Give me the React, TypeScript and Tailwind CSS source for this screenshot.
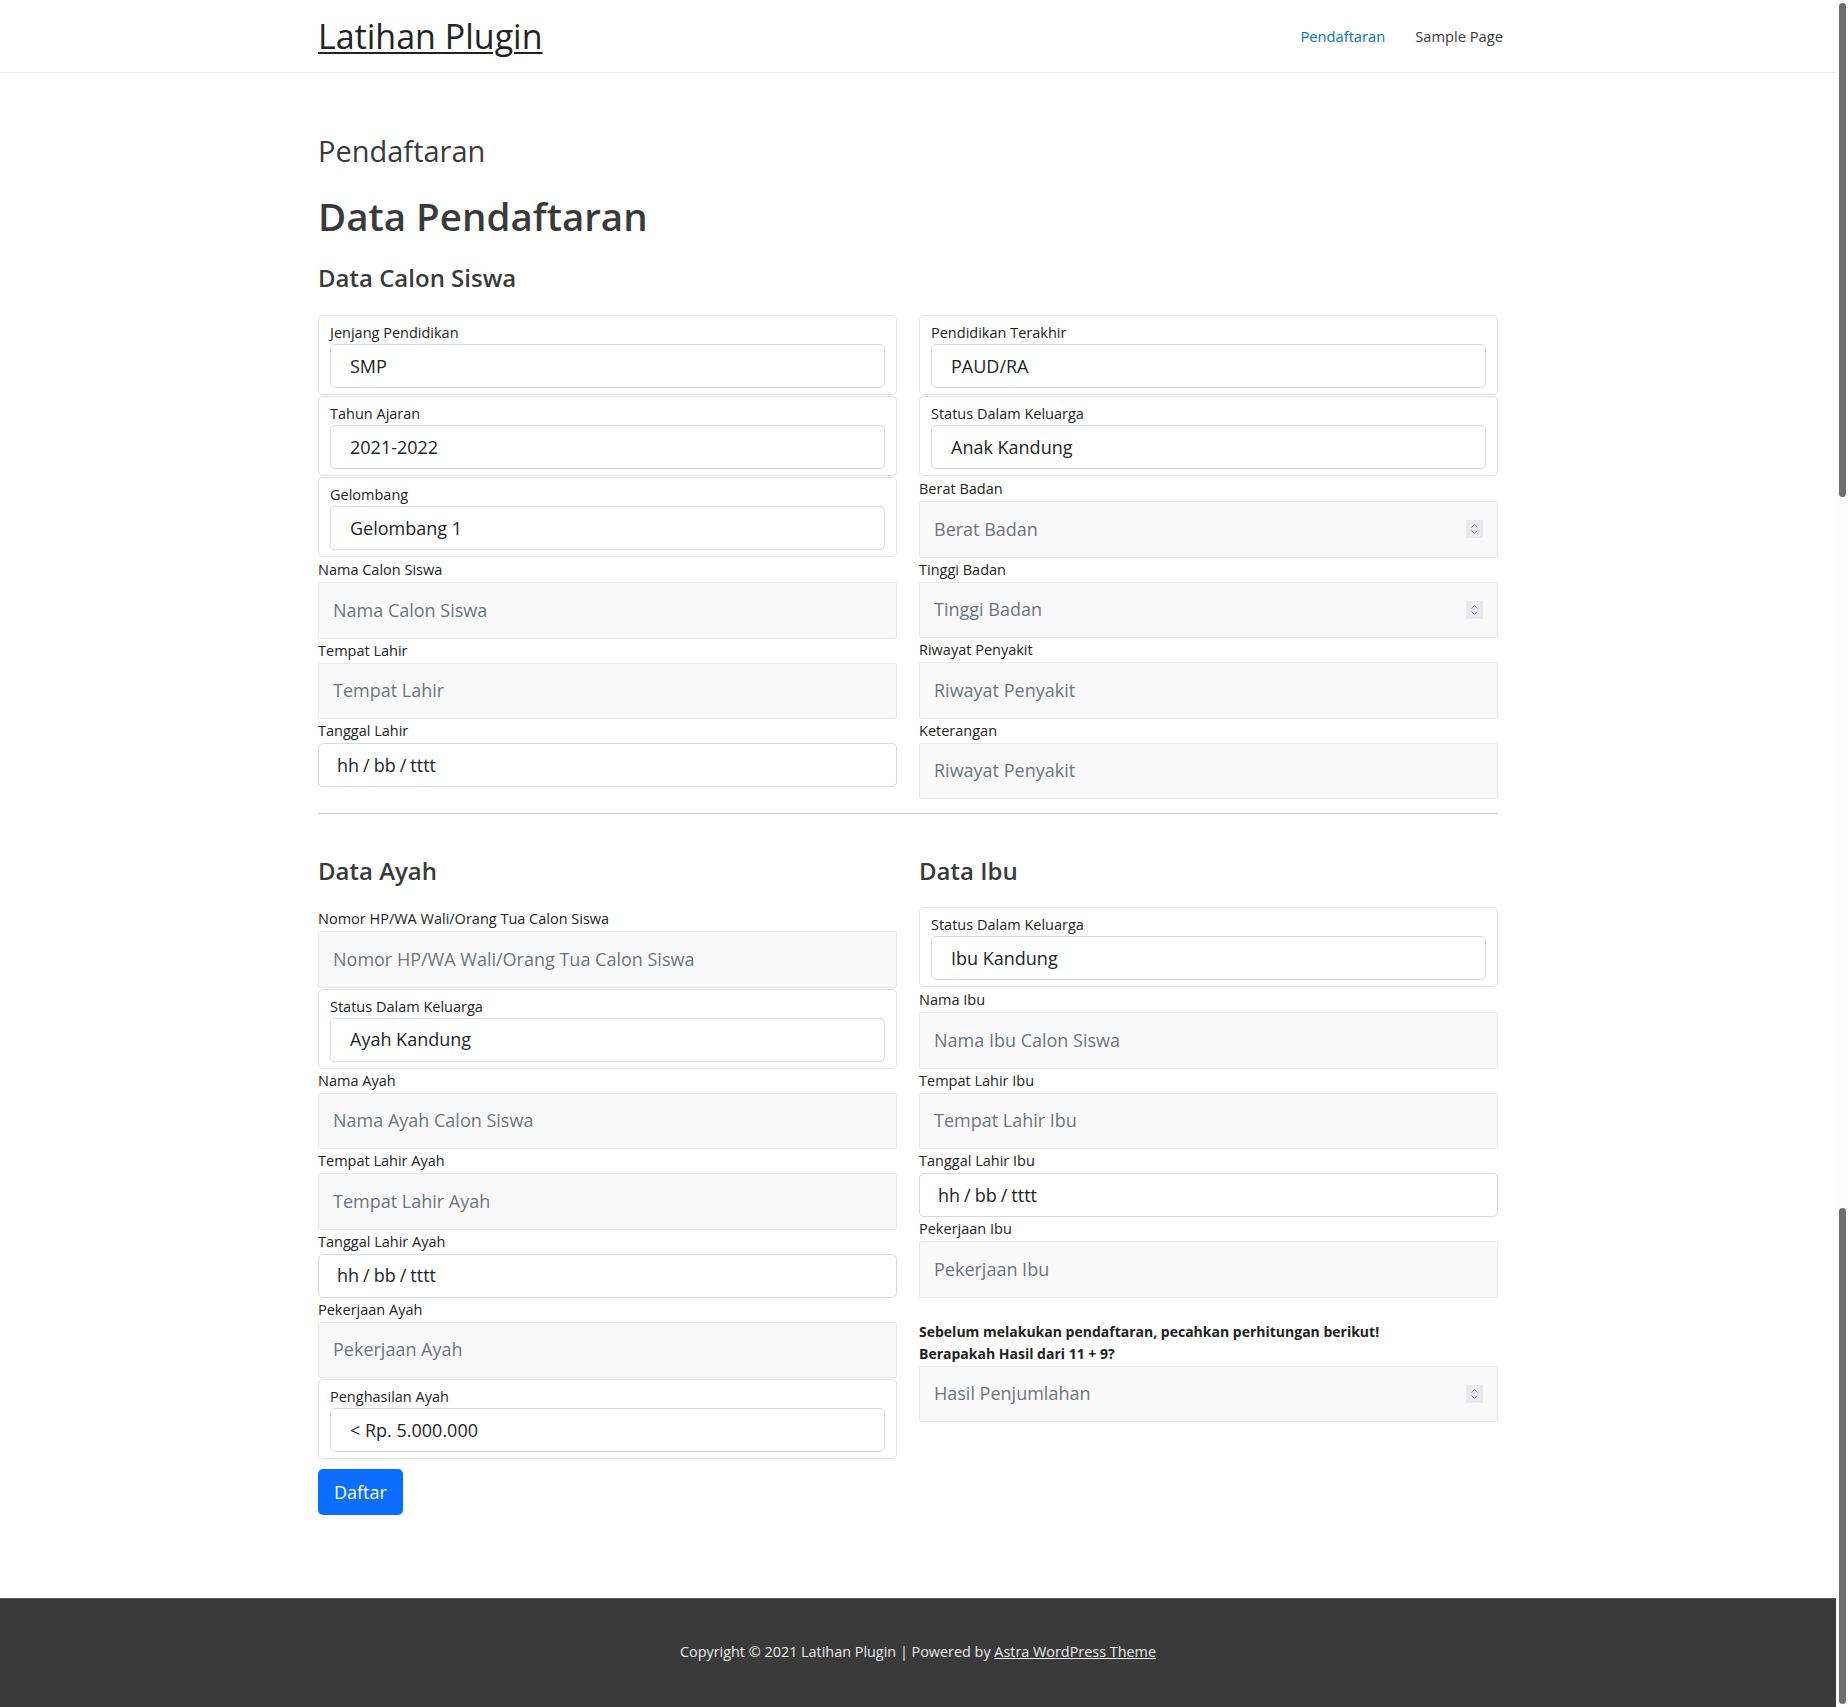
import type { ReactNode } from 'react';

function FieldLabel({ children }: { children: ReactNode }) {
  return <div className="h-[24px] text-[14.5px] leading-[24px] text-[#222]">{children}</div>;
}

function BoxSelect({ label, value, gapTop = false }: { label: string; value: string; gapTop?: boolean }) {
  return (
    <div className={`${gapTop ? 'mt-px' : 'mb-px'} h-[80px] rounded-[5px] border border-[#dee2e6] px-[11px] pt-[7px]`}>
      <div className="h-[21px] text-[14.5px] leading-[20px] text-[#222]">{label}</div>
      <div className="flex h-[44px] items-center rounded-[5px] border border-[#d6d9de] bg-white pl-[19px] text-[18px] text-[#212529]">
        {value}
      </div>
    </div>
  );
}

function Spinner() {
  return (
    <svg width="17" height="18" viewBox="0 0 17 18" className="mr-[14px] shrink-0">
      <rect width="17" height="18" fill="#e9e9ed" />
      <path d="M5.5 7.5 L8.5 4.5 L11.5 7.5" fill="none" stroke="#8a8a8e" strokeWidth="1" />
      <path d="M5.5 10.5 L8.5 13.5 L11.5 10.5" fill="none" stroke="#8a8a8e" strokeWidth="1" />
    </svg>
  );
}

function GrayInput({ placeholder, number = false }: { placeholder: string; number?: boolean }) {
  return (
    <div className="flex h-[56.5px] items-center justify-between rounded-[2px] border border-[#e8e8e8] bg-[#fafafa] pl-[14px] text-[18px] text-[#6c757d]">
      <span>{placeholder}</span>
      {number && <Spinner />}
    </div>
  );
}

function DateInput() {
  return (
    <div className="flex h-[44px] items-center rounded-[5px] border border-[#d6d9de] bg-white pl-[18px] text-[18px] text-[#212529]">
      hh<span className="mx-[4px]">/</span>bb<span className="mx-[4px]">/</span>tttt
    </div>
  );
}

function Field({ label, children }: { label: string; children: ReactNode }) {
  return (
    <div>
      <FieldLabel>{label}</FieldLabel>
      {children}
    </div>
  );
}

function SectionTitle({ children }: { children: ReactNode }) {
  return <h4 className="h-[32px] text-[24px] font-semibold leading-[32px] text-[#3a3a3a]">{children}</h4>;
}

export default function App() {
  return (
    <div className="flex h-screen overflow-hidden bg-white font-['Open_Sans',sans-serif]">
      <div className="flex min-w-0 flex-1 flex-col">
        {/* Header */}
        <header className="h-[73px] shrink-0 border-b border-[#eaeaea]">
          <div className="mx-auto flex h-[72px] w-[1200px] items-center justify-between">
            <a href="#" className="text-[34px] leading-[41px] text-[#222] underline decoration-2 underline-offset-[3px]">
              Latihan Plugin
            </a>
            <nav className="flex text-[14.7px]">
              <a href="#" className="px-[15px] text-[#0274be]">Pendaftaran</a>
              <a href="#" className="px-[15px] text-[#3a3a3a]">Sample Page</a>
            </nav>
          </div>
        </header>

        {/* Content */}
        <main className="mx-auto w-[1200px] pt-[58px]">
          <h1 className="h-[40px] text-[29px] leading-[40px] text-[#3a3a3a]">Pendaftaran</h1>
          <h2 className="mt-[21px] h-[48px] text-[38.5px] font-semibold leading-[48px] text-[#3a3a3a]">Data Pendaftaran</h2>
          <div className="mt-[22px]">
            <SectionTitle>Data Calon Siswa</SectionTitle>
          </div>

          <div className="w-[1180px]">
            <div className="mt-[21px] grid grid-cols-2 items-start gap-x-[22px]">
              <div className="flex flex-col">
                <BoxSelect label="Jenjang Pendidikan" value="SMP" />
                <BoxSelect label="Tahun Ajaran" value="2021-2022" />
                <BoxSelect label="Gelombang" value="Gelombang 1" />
                <Field label="Nama Calon Siswa"><GrayInput placeholder="Nama Calon Siswa" /></Field>
                <Field label="Tempat Lahir"><GrayInput placeholder="Tempat Lahir" /></Field>
                <Field label="Tanggal Lahir"><DateInput /></Field>
              </div>
              <div className="flex flex-col">
                <BoxSelect label="Pendidikan Terakhir" value="PAUD/RA" />
                <BoxSelect label="Status Dalam Keluarga" value="Anak Kandung" />
                <Field label="Berat Badan"><GrayInput placeholder="Berat Badan" number /></Field>
                <Field label="Tinggi Badan"><GrayInput placeholder="Tinggi Badan" number /></Field>
                <Field label="Riwayat Penyakit"><GrayInput placeholder="Riwayat Penyakit" /></Field>
                <Field label="Keterangan"><GrayInput placeholder="Riwayat Penyakit" /></Field>
              </div>
            </div>

            <hr className="mt-[14px] h-px border-0 bg-[#c8c9ca]" />

            <div className="mt-[41px] grid grid-cols-2 items-start gap-x-[22px]">
              {/* Data Ayah */}
              <div className="flex flex-col">
                <div className="mb-[20px]"><SectionTitle>Data Ayah</SectionTitle></div>
                <Field label="Nomor HP/WA Wali/Orang Tua Calon Siswa">
                  <GrayInput placeholder="Nomor HP/WA Wali/Orang Tua Calon Siswa" />
                </Field>
                <BoxSelect label="Status Dalam Keluarga" value="Ayah Kandung" gapTop />
                <Field label="Nama Ayah"><GrayInput placeholder="Nama Ayah Calon Siswa" /></Field>
                <Field label="Tempat Lahir Ayah"><GrayInput placeholder="Tempat Lahir Ayah" /></Field>
                <Field label="Tanggal Lahir Ayah"><DateInput /></Field>
                <Field label="Pekerjaan Ayah"><GrayInput placeholder="Pekerjaan Ayah" /></Field>
                <BoxSelect label="Penghasilan Ayah" value="< Rp. 5.000.000" gapTop />
                <div className="mt-[10px]">
                  <button className="h-[46px] rounded-[5px] bg-[#0d6efd] px-[16px] text-[18px] text-white">
                    Daftar
                  </button>
                </div>
              </div>

              {/* Data Ibu */}
              <div className="flex flex-col">
                <div className="mb-[20px]"><SectionTitle>Data Ibu</SectionTitle></div>
                <BoxSelect label="Status Dalam Keluarga" value="Ibu Kandung" />
                <Field label="Nama Ibu"><GrayInput placeholder="Nama Ibu Calon Siswa" /></Field>
                <Field label="Tempat Lahir Ibu"><GrayInput placeholder="Tempat Lahir Ibu" /></Field>
                <Field label="Tanggal Lahir Ibu"><DateInput /></Field>
                <Field label="Pekerjaan Ibu"><GrayInput placeholder="Pekerjaan Ibu" /></Field>
                <div className="pt-[23px] text-[14px] font-bold leading-[22px] text-[#222]">
                  <p>Sebelum melakukan pendaftaran, pecahkan perhitungan berikut!</p>
                  <p>Berapakah Hasil dari 11 + 9?</p>
                </div>
                <div className="mt-px">
                  <GrayInput placeholder="Hasil Penjumlahan" number />
                </div>
              </div>
            </div>
          </div>
        </main>

        {/* Footer */}
        <footer className="mt-[83px] flex-1 border-t border-[#555] bg-[#3a3a3a] pt-[41px] text-center text-[14.4px] leading-[24px] text-[#ebebeb]">
          Copyright © 2021 Latihan Plugin | Powered by{' '}
          <a href="#" className="underline">Astra WordPress Theme</a>
        </footer>
      </div>

      {/* Scrollbar strip */}
      <div className="flex w-[12px] shrink-0 flex-col justify-between bg-[#fcfcfc] py-[3px]">
        <div className="ml-[3px] h-[494px] w-[7px] rounded-full bg-[#6e6e6e]" />
        <div className="ml-[3px] h-[496px] w-[7px] rounded-full bg-[#6e6e6e]" />
      </div>
    </div>
  );
}
